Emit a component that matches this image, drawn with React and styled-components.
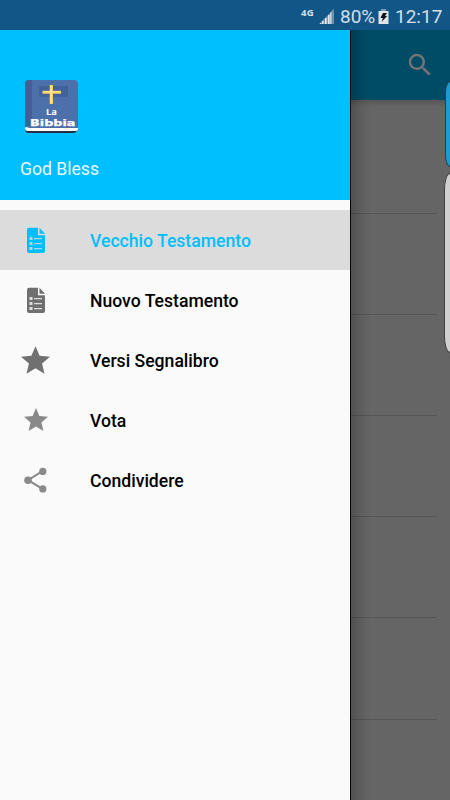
import React from 'react';
import styled, { createGlobalStyle } from 'styled-components';

const GlobalStyle = createGlobalStyle`
  * { box-sizing: border-box; }
  body { margin: 0; background: #656565; font-family: Roboto, sans-serif; }
  svg { display: block; flex: none; }
`;

const Screen = styled.div`
  position: relative;
  width: 450px;
  height: 800px;
  overflow: hidden;
  display: flex;
  flex-direction: column;
  background: #656565;
`;

const StatusBar = styled.header`
  height: 30px;
  flex: none;
  display: flex;
  align-items: center;
  justify-content: flex-end;
  padding: 3px 8px 0 0;
  background: #125587;
  color: #d3e0ea;
`;

const Network = styled.span`
  font: 700 9.5px/10px "Noto Sans", sans-serif;
  letter-spacing: 0.3px;
  margin: -8px 5px 0 0;
`;

const StatusText = styled.span`
  font-size: 19px;
  line-height: 26px;
  width: ${(p) => p.$width}px;
  margin-left: ${(p) => p.$gap}px;
  white-space: nowrap;
`;

const Body = styled.div`
  flex: 1;
  display: flex;
  min-height: 0;
`;

const Drawer = styled.nav`
  width: 350px;
  flex: none;
  background: #fafafa;
`;

const DrawerHeader = styled.div`
  height: 170px;
  display: flex;
  flex-direction: column;
  padding: 49px 20px 0 24px;
  background: #00bfff;
`;

const AccountName = styled.div`
  margin: 24px 0 0 -4px;
  font-size: 17.6px;
  line-height: 24px;
  color: #e9f8ff;
`;

const Menu = styled.ul`
  list-style: none;
  margin: 0;
  padding: 10px 0 0;
`;

const MenuItem = styled.li`
  height: 60px;
  display: flex;
  align-items: center;
  background: ${(p) => (p.$active ? '#dcdcdc' : 'transparent')};
  color: ${(p) => (p.$active ? '#00bfff' : '#000')};
`;

const IconSlot = styled.span`
  width: 30px;
  height: 30px;
  margin: 0 39.5px 0 20.5px;
  display: grid;
  place-items: center;
  color: ${(p) => p.$color};
`;

const Label = styled.span`
  font-size: 17.6px;
  font-weight: 500;
  line-height: 24px;
  padding-top: 2px;
  white-space: nowrap;
`;

const Content = styled.main`
  flex: 1;
  position: relative;
  border-left: 1px solid #050505;
`;

const DrawerShadow = styled.div`
  position: absolute;
  inset: 0 auto 0 0;
  width: 20px;
  background: linear-gradient(90deg, rgba(0, 0, 0, 0.2), rgba(0, 0, 0, 0.05) 60%, transparent);
`;

const Toolbar = styled.div`
  height: 70px;
  display: flex;
  align-items: center;
  justify-content: flex-end;
  padding-right: 15px;
  background: #004c66;
`;

const List = styled.div`
  height: 700px;
  padding: 12.4px 13px 0 0;
  background: linear-gradient(#555, #656565 7px);
`;

const Row = styled.div`
  height: 101.2px;
  border-bottom: 1px solid #555;
`;

const EdgePanel = styled.div`
  position: absolute;
  right: -6px;
  top: ${(p) => p.$top}px;
  width: ${(p) => p.$width}px;
  height: ${(p) => p.$height}px;
  border: 1px solid ${(p) => p.$edge};
  border-radius: ${(p) => p.$radius};
  background: ${(p) => p.$fill};
`;

const SignalIcon = () => (
  <svg width="16" height="16" viewBox="0 0 16 16">
    <path d="M0 15 15 0v15z" fill="#7898b3" />
    <path d="M1 15v-1h1v1zm2 0v-3h1.6v3zm3 0V9h1.6v6zm3 0V6h1.6v9z" fill="#e0e8ed" />
    <path d="M11 15V4l1.5-1.5V15z" fill="#c2d2df" />
    <path d="M13 15V2l2-2v15z" fill="#6a93aa" />
  </svg>
);

const BatteryIcon = () => (
  <svg width="11" height="16" viewBox="0 0 11 16">
    <path d="M3 0h5v2H3z" fill="#7b99b1" />
    <path d="M.5 2h10v13H.5z" fill="#e0e7eb" />
    <path d="M5 4h4L7 7h2.2L3.5 13 5 9H2.4z" fill="#111" />
  </svg>
);

const BibleIcon = () => (
  <svg width="54" height="54" viewBox="0 0 54 54">
    <path d="M5 1h45q4 0 4 4v44q0 4-4 4H5q-4 0-4-4V5q0-4 4-4" fill="#4c70a9" />
    <path d="M5 1h3v46H3q-2 0-2 2V5q0-4 4-4" fill="#416096" />
    <path d="M15 7h29v11H15z" fill="#42639a" />
    <path d="M25.7 6h3.3v19h-3.3zM18.5 11.8H37v3H18.5z" fill="#f3cc5c" />
    <path d="M26.5 6.5h1.2v18h-1.2zM19 12.5h17.5v1H19z" fill="#fff0a6" />
    <path d="M53 49v1q0 4-4 4H5q-4 0-4-4z" fill="#262d42" />
    <path d="M1 49.5Q1 47 5 49h49v1.5q-1 1.5-3 1.5H4q-3 0-3-2.5" fill="#fff" />
    <text x="27.5" y="36" textAnchor="middle" fill="#fff" fontFamily="Open Sans, sans-serif" fontWeight="700" fontSize="9" textLength="11" lengthAdjust="spacingAndGlyphs">La</text>
    <text x="6" y="46.6" fill="#fff" stroke="#fff" strokeWidth=".25" fontFamily="DejaVu Sans, sans-serif" fontWeight="700" fontSize="9" textLength="45.5" lengthAdjust="spacingAndGlyphs">Bibbia</text>
  </svg>
);

const DocumentIcon = ({ cut }) => (
  <svg width="18" height="26" viewBox="0 0 18 26">
    <path d="M2 .8h9v7.5h7V24q0 2-2 2H2q-2 0-2-2V3Q0 .8 2 .8M12.5.8 18 6.8h-5.5z" fill="currentColor" />
    <path d="M2.5 10h3v3h-3zm0 5h3v3h-3zm0 5h3v3h-3zM7 11h8v1.3H7zm0 5h8v1.3H7zm0 5h8v1.3H7z" fill={cut} fillOpacity=".8" />
  </svg>
);

const StarIcon = ({ size }) => (
  <svg width={size} height={size} viewBox="2 2.4 20 19">
    <path d="M12 17.27 18.18 21l-1.64-7.03L22 9.24l-7.19-.61L12 2 9.19 8.63 2 9.24l5.46 4.73L5.82 21z" fill="currentColor" />
  </svg>
);

const ShareIcon = () => (
  <svg width="24" height="26" viewBox="0 0 24 26">
    <path d="m18.5 4.2-14.5 9 14.5 8.7" fill="none" stroke="currentColor" strokeWidth="2" />
    <circle cx="18.8" cy="4.4" r="3.6" fill="currentColor" />
    <circle cx="4" cy="13.2" r="3.8" fill="currentColor" />
    <circle cx="18.8" cy="21.9" r="3.6" fill="currentColor" />
  </svg>
);

const SearchIcon = () => (
  <svg width="30" height="30" viewBox="0 0 24 24">
    <path d="M15.5 14h-.79l-.28-.27A6.47 6.47 0 0 0 16 9.5 6.5 6.5 0 1 0 9.5 16c1.61 0 3.09-.59 4.23-1.57l.27.28v.79l5 4.99L20.49 19l-4.99-5zm-6 0C7.01 14 5 11.99 5 9.5S7.01 5 9.5 5 14 7.01 14 9.5 11.99 14 9.5 14z" fill="#747474" />
  </svg>
);

const items = [
  { label: 'Vecchio Testamento', color: '#00bfff', icon: <DocumentIcon cut="#dcdcdc" />, active: true },
  { label: 'Nuovo Testamento', color: '#707070', icon: <DocumentIcon cut="#fafafa" /> },
  { label: 'Versi Segnalibro', color: '#707070', icon: <StarIcon size={29} /> },
  { label: 'Vota', color: '#898989', icon: <StarIcon size={24} /> },
  { label: 'Condividere', color: '#898989', icon: <ShareIcon /> },
];

export default function App() {
  return (
    <>
      <GlobalStyle />
      <Screen>
        <StatusBar>
          <Network>4G</Network>
          <SignalIcon />
          <StatusText $gap={5} $width={38}>80%</StatusText>
          <BatteryIcon />
          <StatusText $gap={6} $width={47}>12:17</StatusText>
        </StatusBar>
        <Body>
          <Drawer>
            <DrawerHeader>
              <BibleIcon />
              <AccountName>God Bless</AccountName>
            </DrawerHeader>
            <Menu>
              {items.map((item) => (
                <MenuItem key={item.label} $active={item.active}>
                  <IconSlot $color={item.color}>{item.icon}</IconSlot>
                  <Label>{item.label}</Label>
                </MenuItem>
              ))}
            </Menu>
          </Drawer>
          <Content>
            <Toolbar>
              <SearchIcon />
            </Toolbar>
            <List>
              {[0, 1, 2, 3, 4, 5].map((row) => (
                <Row key={row} />
              ))}
            </List>
            <DrawerShadow />
          </Content>
        </Body>
        <EdgePanel $top={81} $width={11} $height={86} $radius="7px / 14px" $fill="#1c9bd0" $edge="#2d3a3e" />
        <EdgePanel $top={173} $width={12} $height={180} $radius="10px / 28px" $fill="#d0d0d0" $edge="#404040" />
      </Screen>
    </>
  );
}
